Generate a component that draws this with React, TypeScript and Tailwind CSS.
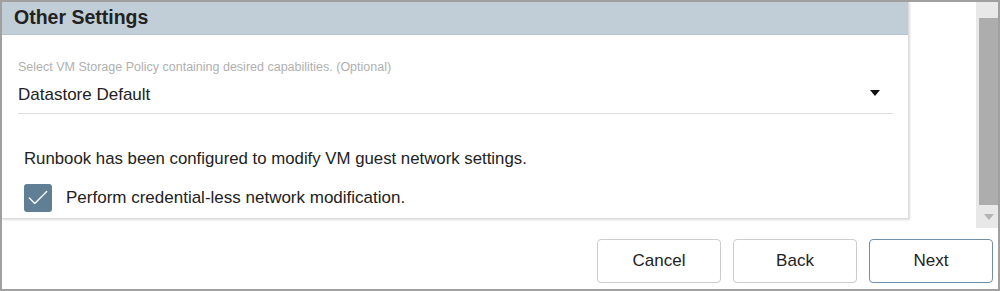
import { Check } from 'lucide-react'

const ScrollBar = () => {
  return (
    <div className="flex h-full w-[22px] flex-col bg-[#e8e8e8]">
      <div className="h-[16px]" />
      <div className="ml-[3px] h-[187px] bg-[#adadad]" />
      <div className="flex h-[23px] items-center justify-center pl-[3px]">
        <div className="h-0 w-0 border-x-[5px] border-t-[6px] border-x-transparent border-t-[#b4b4b4]" />
      </div>
    </div>
  )
}

const WizardButton: React.FC<{ label: string; primary?: boolean }> = ({ label, primary }) => {
  return (
    <button
      className={
        primary
          ? 'h-[44px] w-[124px] rounded-[4px] border border-[#6f8fab] bg-white text-[17px] text-[#222]'
          : 'h-[44px] w-[124px] rounded-[4px] border border-[#cccccc] bg-white text-[17px] text-[#222]'
      }
    >
      {label}
    </button>
  )
}

export default function App() {
  return (
    <div
      className="flex h-[291px] w-[1000px] flex-col border-2 border-[#a0a0a0] bg-white"
      style={{ fontFamily: '"Liberation Sans", Arial, sans-serif' }}
    >
      <div className="flex h-[226px]">
        <div className="flex-1 pr-[67px]">
          <div className="h-[217px] border-r border-b border-[#dcdcdc] bg-white shadow-[1px_1px_2px_rgba(0,0,0,0.15)]">
            <div className="flex h-[33px] items-center border-b border-[#b3c2cd] bg-[#c1ced7] px-3">
              <h3 className="text-[19.5px] font-bold text-[#222]">Other Settings</h3>
            </div>
            <div className="pr-[15px] pl-4">
              <p className="mt-[25px] h-[14px] text-[12.5px] leading-[14px] text-[#b0b0b0]">
                Select VM Storage Policy containing desired capabilities. (Optional)
              </p>
              <div className="mt-[2px] flex h-[38px] items-center justify-between border-b border-[#dedede] pr-[13px]">
                <span className="text-[17px] text-[#222]">Datastore Default</span>
                <div className="mb-[3px] h-0 w-0 border-x-[5px] border-t-[6px] border-x-transparent border-t-[#111]" />
              </div>
              <div className="pl-[6px]">
                <p className="mt-[35px] h-[20px] text-[16.8px] leading-[20px] text-[#222]">
                  Runbook has been configured to modify VM guest network settings.
                </p>
                <div className="mt-[15px] flex items-center gap-[14px]">
                  <div className="flex h-[28px] w-[28px] items-center justify-center rounded-[3px] bg-[#607f94]">
                    <Check size={26} strokeWidth={1.2} color="#ffffff" />
                  </div>
                  <span className="text-[17px] text-[#222]">Perform credential-less network modification.</span>
                </div>
              </div>
            </div>
          </div>
        </div>
        <ScrollBar />
      </div>
      <div className="flex flex-1 items-start justify-end gap-[12px] pt-[11px] pr-[5px]">
        <WizardButton label="Cancel" />
        <WizardButton label="Back" />
        <WizardButton label="Next" primary />
      </div>
    </div>
  )
}
